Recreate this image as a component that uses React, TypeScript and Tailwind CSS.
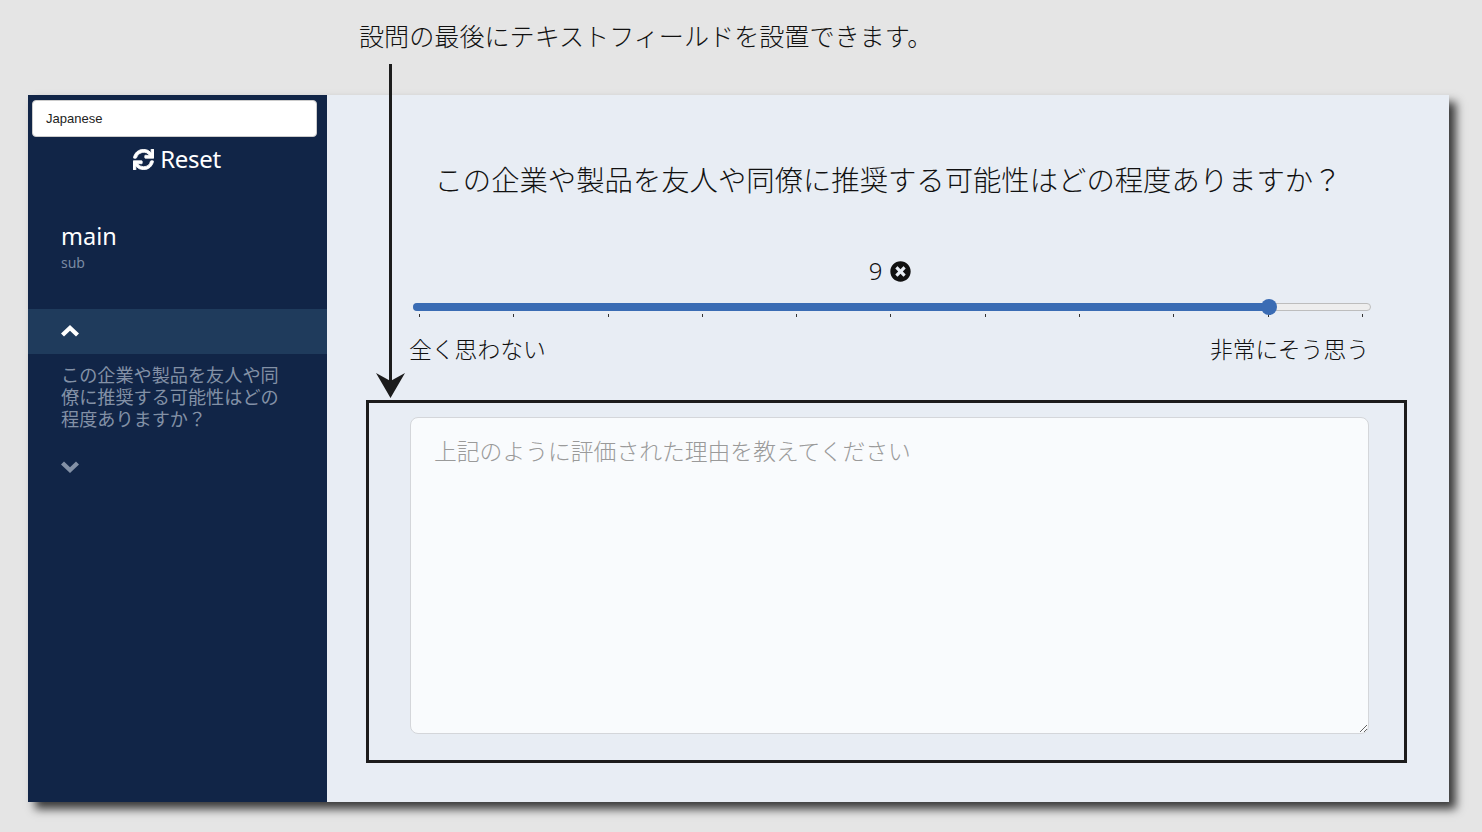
import { FaSync, FaTimesCircle } from "react-icons/fa";

const TICKS = [0, 1, 2, 3, 4, 5, 6, 7, 8, 9, 10];
const JP = "font-['Noto_Sans','Noto_Sans_CJK_JP',sans-serif]";

function Chevron({ up }: { up?: boolean }) {
  return (
    <svg width="18" height="12" viewBox="0 0 18 12" fill="currentColor" aria-hidden="true">
      <path d={up ? "M9 0 L18 8.5 L15 11.5 L9 5.8 L3 11.5 L0 8.5 Z" : "M9 12 L18 3.5 L15 0.5 L9 6.2 L3 0.5 L0 3.5 Z"} />
    </svg>
  );
}

function Slider() {
  return (
    <div className="ml-[86px] w-[958px]">
      <div className="relative h-2 rounded-full border border-[#bdbdbd] bg-[#eeeeee]">
        <div className="absolute -inset-y-px -left-px w-[856px] rounded-full bg-[#3a6cb4]" />
        <div className="absolute left-[847px] top-[-5px] size-4 rounded-full bg-[#3a6cb4]" />
      </div>
      <div className="mt-[3px] flex justify-between pl-[6px] pr-[8px]">
        {TICKS.map((t) => (
          <span key={t} className="h-[3px] w-px bg-[#333333]" />
        ))}
      </div>
    </div>
  );
}

export default function App() {
  return (
    <div className={`relative h-[832px] overflow-hidden bg-[#e5e5e5] ${JP}`}>
      <p className="h-[95px] pl-[359px] pt-[20px] text-[25.1px] leading-[33px] font-light text-[#111111]">
        設問の最後にテキストフィールドを設置できます。
      </p>

      <div className="ml-7 flex h-[707px] w-[1421px] shadow-[7px_7px_9px_rgba(0,0,0,0.75)]">
        <aside className="flex w-[299px] flex-col bg-[#112547]">
          <div className="mx-1 mt-[5px] flex h-[37px] w-[285px] items-center rounded-[4px] border border-[#cccccc] bg-white pl-[13px] font-['Liberation_Sans',sans-serif] text-[13px] text-[#222222]">
            Japanese
          </div>
          <div className="mt-[6px] flex h-8 items-center justify-center gap-[6px] pr-[1px] text-[24px] tracking-[-0.3px] text-white">
            <FaSync className="size-[21px]" stroke="currentColor" strokeWidth={20} />
            <span>Reset</span>
          </div>
          <div className="mt-[43px] pl-[33px] text-[23.5px] leading-[36px] text-white">main</div>
          <div className="pl-[33px] text-[14px] leading-[18px] text-[#7a8aa3]">sub</div>

          <div className="mt-[37px] flex h-[45px] items-center bg-[#1f3b5c] pb-[2px] pl-[33px] text-white">
            <Chevron up />
          </div>
          <p className="mt-[10px] w-[258px] pl-[33px] text-[18.15px] leading-[22px] text-[#8391a6]">
            この企業や製品を友人や同僚に推奨する可能性はどの程度ありますか？
          </p>
          <div className="mt-[31px] pl-[33px] text-[#8391a6]">
            <Chevron />
          </div>
        </aside>

        <main className="relative flex-1 bg-[#e8edf4] text-[#111111]">
          <h1 className="mt-[65px] h-[40px] text-center text-[28.35px] leading-[40px] font-light">
            この企業や製品を友人や同僚に推奨する可能性はどの程度ありますか？
          </h1>

          <div className="mt-[56px] flex h-[30px] items-center justify-center gap-[8px] pl-[4px] text-[24px] font-light">
            <span>9</span>
            <FaTimesCircle className="size-[21px] text-[#111111]" />
          </div>

          <div className="mt-[17px]">
            <Slider />
          </div>

          <div className="ml-[82px] mt-[16px] flex w-[960px] justify-between text-[22.8px] leading-[34px] font-light">
            <span>全く思わない</span>
            <span>非常にそう思う</span>
          </div>

          <div className="ml-[39px] mt-[33px] h-[363px] w-[1041px] border-[3px] border-[#1c1c1c] pl-[41px] pr-[35px] pt-[14px]">
            <textarea
              placeholder="上記のように評価された理由を教えてください"
              className="h-[317px] w-full rounded-[8px] border border-[#d4d6da] bg-[#f9fbfd] px-[23px] pb-[16px] pt-[17px] text-[22.8px] leading-[34px] font-light outline-none placeholder:text-[#9a9a9a]"
            />
          </div>

          {/* callout arrow, sits on top of the card */}
          <svg
            className="absolute left-[47px] top-[-31px]"
            width="33"
            height="336"
            viewBox="0 0 33 336"
            aria-hidden="true"
          >
            <line x1="16.5" y1="0" x2="16.5" y2="320" stroke="#1c1c1c" strokeWidth="3" />
            <path d="M2 309 L16.5 334 L31 309 L16.5 317 Z" fill="#1c1c1c" />
          </svg>
        </main>
      </div>
    </div>
  );
}
